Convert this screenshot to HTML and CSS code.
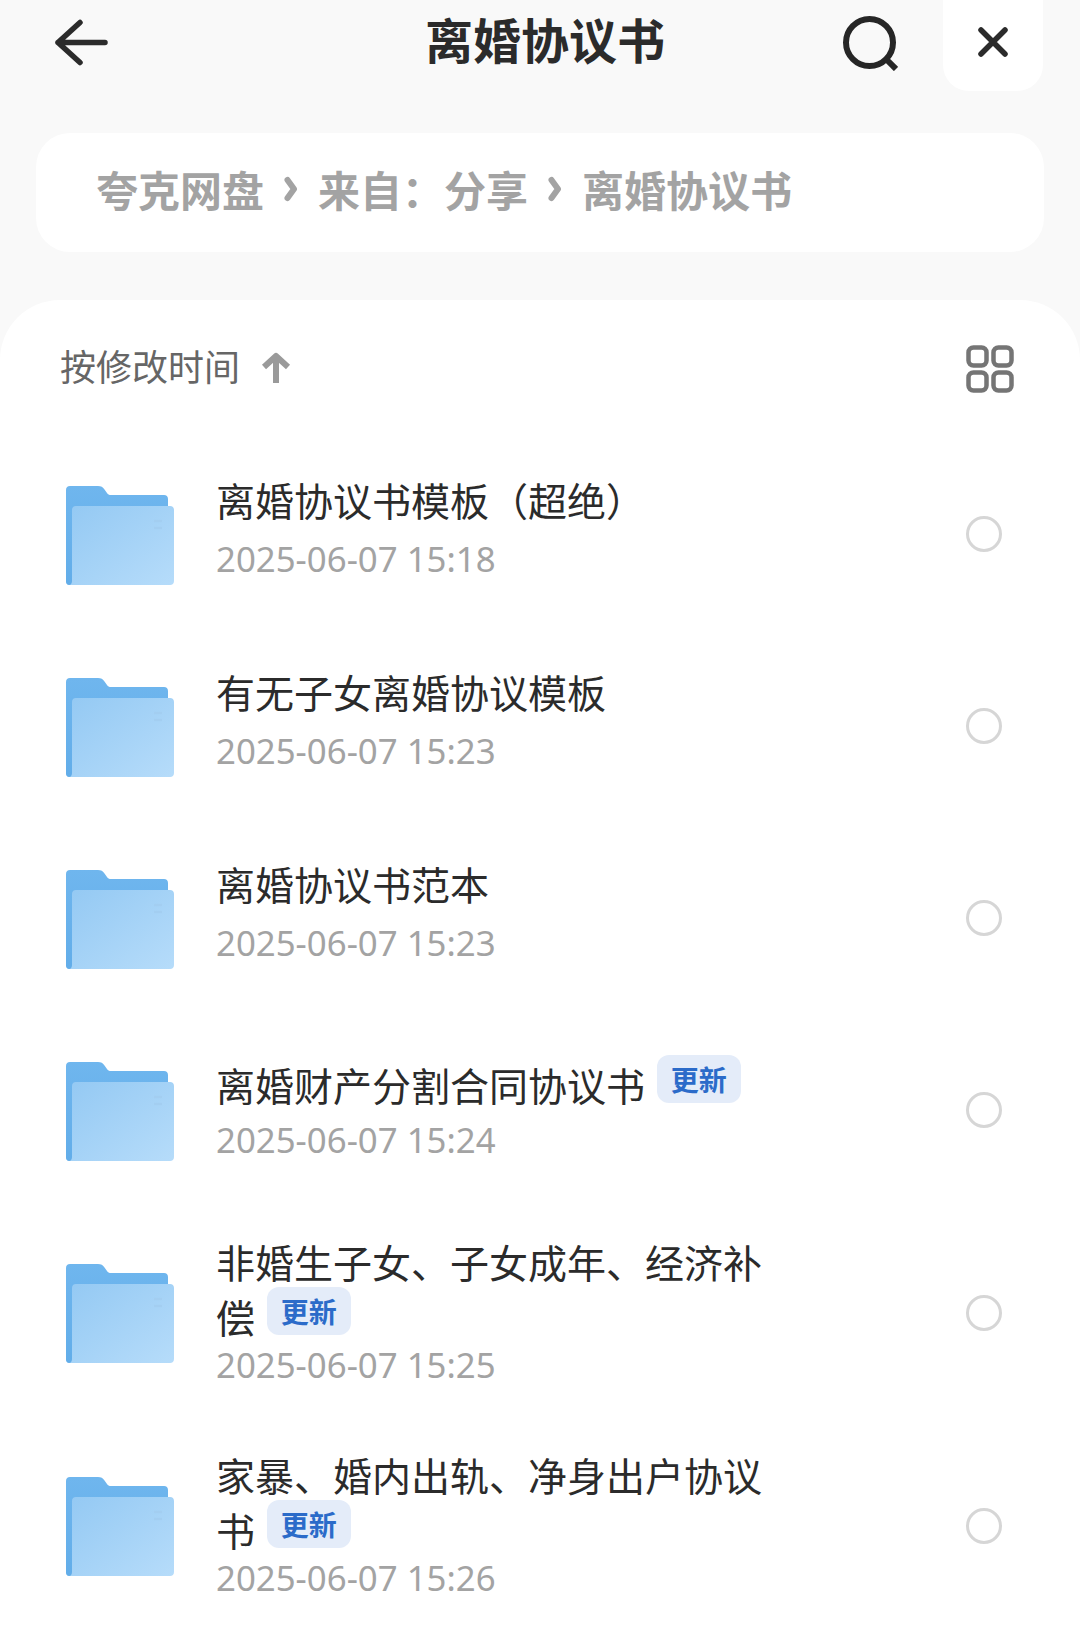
FILE: index.html
```html
<!DOCTYPE html>
<html lang="zh-CN">
<head>
    <meta charset="UTF-8">
    <title>离婚协议书</title>
    <link rel="stylesheet" href="styles.css">
</head>
<body>

<svg class="sprite" aria-hidden="true">
    <defs>
        <linearGradient id="folder-back" x1="0" y1="0" x2="0" y2="1">
            <stop offset="0" stop-color="#6fb6ee"/>
            <stop offset="1" stop-color="#62ade9"/>
        </linearGradient>
        <linearGradient id="folder-front" x1="0" y1="0" x2="1" y2="1">
            <stop offset="0" stop-color="#94c9f3"/>
            <stop offset="1" stop-color="#b6dcfa"/>
        </linearGradient>
        <symbol id="folder" viewBox="0 0 108 99">
            <path d="M4 0H32C35 0 37 1 38.500 3.500L41 7C42 8.500 43 9 45 9H98C100.500 9 102 10.500 102 13V30H6V99H3C1 99 0 97.500 0 96V4C0 1.500 1.500 0 4 0Z" fill="url(#folder-back)"/>
            <path d="M6 24C6 21.500 7.500 20 10 20H104C106.500 20 108 21.500 108 24V95C108 97.500 106.500 99 104 99H3C5 99 6 97 6 95Z" fill="url(#folder-front)"/>
            <path d="M88 35H96M88 42H96" stroke="#a3cef1" stroke-width="2.500"/>
        </symbol>
    </defs>
</svg>

<!-- Top bar -->
<header class="top-bar">
    <svg class="back-icon" viewBox="0 0 54 47" fill="none" stroke="#2b2b2b" stroke-width="5.500" stroke-linecap="round" stroke-linejoin="round">
        <path d="M51 23.500H4M26 3.500L4 23.500L26 43.500"/>
    </svg>
    <h1 class="page-title">离婚协议书</h1>
    <div class="top-actions">
        <svg class="search-icon" viewBox="0 0 55 55" fill="none" stroke="#262626" stroke-width="6">
            <circle cx="26.500" cy="26.500" r="23.500"/>
            <path d="M43 43L53 53"/>
        </svg>
        <div class="close-button">
            <svg class="close-icon" viewBox="0 0 30 30" fill="none" stroke="#2b2b2b" stroke-width="5.500" stroke-linecap="round">
                <path d="M3 3L27 27M27 3L3 27"/>
            </svg>
        </div>
    </div>
</header>

<!-- Breadcrumb -->
<nav class="breadcrumb">
    <span>夸克网盘</span>
    <svg class="crumb-arrow" viewBox="0 0 14 26" fill="none" stroke="#a3a3a3" stroke-width="6" stroke-linecap="round" stroke-linejoin="round"><path d="M3.500 4L10 13L3.500 22"/></svg>
    <span>来自：分享</span>
    <svg class="crumb-arrow" viewBox="0 0 14 26" fill="none" stroke="#a3a3a3" stroke-width="6" stroke-linecap="round" stroke-linejoin="round"><path d="M3.500 4L10 13L3.500 22"/></svg>
    <span>离婚协议书</span>
</nav>

<main class="sheet">
    <!-- Sort -->
    <div class="sort-bar">
        <span class="sort-label">按修改时间</span>
        <svg class="sort-arrow" viewBox="0 0 30 32" fill="none" stroke="#9a9a9a" stroke-width="6" stroke-linejoin="round"><path d="M15 32V5M3 16L15 5L27 16"/></svg>
        <svg class="grid-icon" viewBox="0 0 48 48" fill="none" stroke="#757575" stroke-width="4.500">
            <rect x="2.500" y="2.500" width="18" height="18" rx="5"/>
            <rect x="27.500" y="2.500" width="18" height="18" rx="5"/>
            <rect x="2.500" y="27.500" width="18" height="18" rx="5"/>
            <rect x="27.500" y="27.500" width="18" height="18" rx="5"/>
        </svg>
    </div>

    <!-- File list -->
    <div class="file-row">
        <svg class="folder-icon"><use href="#folder"/></svg>
        <div class="file-info">
            <div class="file-name">离婚协议书模板（超绝）</div>
            <div class="file-date">2025-06-07 15:18</div>
        </div>
        <span class="radio"></span>
    </div>

    <div class="file-row">
        <svg class="folder-icon"><use href="#folder"/></svg>
        <div class="file-info">
            <div class="file-name">有无子女离婚协议模板</div>
            <div class="file-date">2025-06-07 15:23</div>
        </div>
        <span class="radio"></span>
    </div>

    <div class="file-row">
        <svg class="folder-icon"><use href="#folder"/></svg>
        <div class="file-info">
            <div class="file-name">离婚协议书范本</div>
            <div class="file-date">2025-06-07 15:23</div>
        </div>
        <span class="radio"></span>
    </div>

    <div class="file-row badged">
        <svg class="folder-icon"><use href="#folder"/></svg>
        <div class="file-info">
            <div class="file-name">离婚财产分割合同协议书 <span class="badge">更新</span></div>
            <div class="file-date">2025-06-07 15:24</div>
        </div>
        <span class="radio"></span>
    </div>

    <div class="file-row tall">
        <svg class="folder-icon"><use href="#folder"/></svg>
        <div class="file-info">
            <div class="file-name">非婚生子女、子女成年、经济补偿 <span class="badge">更新</span></div>
            <div class="file-date">2025-06-07 15:25</div>
        </div>
        <span class="radio"></span>
    </div>

    <div class="file-row tall">
        <svg class="folder-icon"><use href="#folder"/></svg>
        <div class="file-info">
            <div class="file-name">家暴、婚内出轨、净身出户协议书 <span class="badge">更新</span></div>
            <div class="file-date">2025-06-07 15:26</div>
        </div>
        <span class="radio"></span>
    </div>
</main>

</body>
</html>
```

FILE: styles.css
```css
html, body {
    height: 100%;
}
body {
    margin: 0;
    background-color: #f9f9f9;
    font-family: "Noto Sans CJK SC", "Noto Sans", sans-serif;
    overflow: hidden;
}
.sprite {
    position: absolute;
    width: 0;
    height: 0;
}
.top-bar {
    display: grid;
    grid-template-columns: 1fr auto 1fr;
    align-items: center;
    height: 91px;
    padding: 0 37px 0 47px;
}
.back-icon {
    width: 54px;
    height: 47px;
    margin-left: 7px;
    margin-top: -6px;
}
.page-title {
    margin: 0 0 16px;
    font-size: 48px;
    font-weight: 700;
    line-height: 72px;
    color: #2b2b2b;
}
.top-actions {
    display: flex;
    align-items: center;
    justify-content: flex-end;
    gap: 45px;
}
.search-icon {
    width: 55px;
    height: 55px;
    margin-top: -4px;
}
.close-button {
    display: flex;
    align-items: center;
    justify-content: center;
    width: 100px;
    height: 91px;
    background-color: #fff;
    border-radius: 0 0 26px 26px;
}
.close-icon {
    width: 30px;
    height: 30px;
    margin-top: -8px;
}
.breadcrumb {
    display: flex;
    align-items: center;
    box-sizing: border-box;
    height: 119px;
    margin: 42px 36px 0;
    padding: 0 0 8px 60px;
    background-color: #fff;
    border-radius: 34px;
    font-size: 42px;
    font-weight: 700;
    color: #a3a3a3;
}
.crumb-arrow {
    width: 14px;
    height: 26px;
    margin: 0 20px;
}
.sheet {
    margin-top: 48px;
    height: 1346px;
    background-color: #fff;
    border-radius: 60px 60px 0 0;
}
.sort-bar {
    display: flex;
    align-items: center;
    height: 138px;
    padding: 0 66px 0 60px;
}
.sort-label {
    font-size: 36px;
    color: #666;
    margin-bottom: 8px;
}
.sort-arrow {
    width: 30px;
    height: 32px;
    margin: 0 0 4px 21px;
}
.grid-icon {
    width: 48px;
    height: 48px;
    margin-left: auto;
}
.file-row {
    display: flex;
    align-items: center;
    height: 192px;
    padding: 0 78px 0 66px;
}
.file-row.tall {
    height: 213px;
}
.folder-icon {
    flex: none;
    width: 108px;
    height: 99px;
    margin: 2px 42px 0 0;
}
.file-info {
    flex: 1;
    padding-bottom: 15px;
}
.file-name {
    width: 570px;
    font-size: 39px;
    line-height: 55px;
    color: #2b2b2b;
    margin-bottom: 9px;
}
.badged .file-info {
    padding-bottom: 0;
}
.badged .file-name {
    margin-bottom: 5px;
}
.tall .file-info {
    padding-bottom: 4px;
}
.tall .file-name {
    margin-bottom: -2px;
}
.file-date {
    font-family: "Noto Sans", sans-serif;
    font-size: 34.800px;
    line-height: 46px;
    color: #a3a3a3;
}
.badge {
    display: inline-block;
    width: 84px;
    height: 48px;
    margin: -12px 0 0 3px;
    background-color: #e4ecf9;
    border-radius: 12px;
    font-size: 28px;
    font-weight: 700;
    line-height: 48px;
    text-align: center;
    color: #2b6bc9;
    vertical-align: 10px;
}
.radio {
    flex: none;
    width: 36px;
    height: 36px;
    box-sizing: border-box;
    border: 3px solid #d6d6d6;
    border-radius: 50%;
}
```
